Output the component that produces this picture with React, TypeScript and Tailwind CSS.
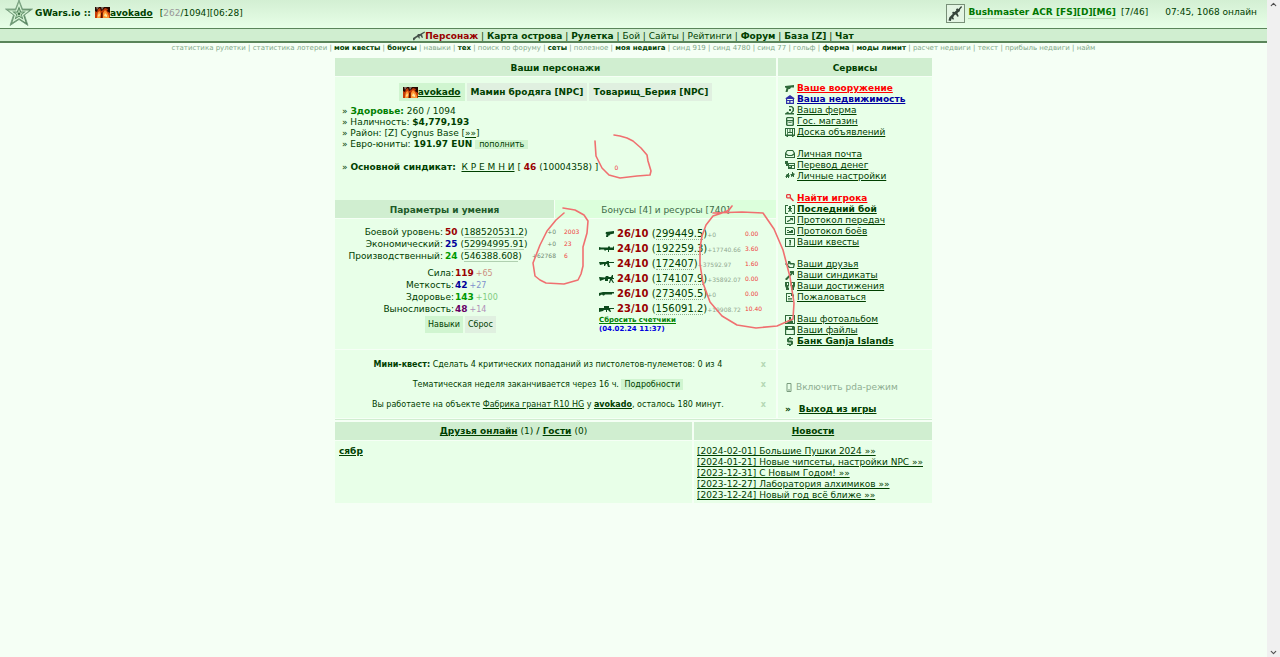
import { ChevronUp, ChevronDown } from 'lucide-react';

const menu = [
  { label: 'Карта острова', bold: true },
  { label: 'Рулетка', bold: true },
  { label: 'Бой', bold: false },
  { label: 'Сайты', bold: false },
  { label: 'Рейтинги', bold: false },
  { label: 'Форум', bold: true },
  { label: 'База [Z]', bold: true },
  { label: 'Чат', bold: true },
];

const shortcuts = [
  { label: 'статистика рулетки' },
  { label: 'статистика лотереи' },
  { label: 'мои квесты', bold: true },
  { label: 'бонусы', bold: true },
  { label: 'навыки' },
  { label: 'тех', bold: true },
  { label: 'поиск по форуму' },
  { label: 'сеты', bold: true },
  { label: 'полезное' },
  { label: 'моя недвига', bold: true },
  { label: 'синд 919' },
  { label: 'синд 4780' },
  { label: 'синд 77' },
  { label: 'гольф' },
  { label: 'ферма', bold: true },
  { label: 'моды лимит', bold: true },
  { label: 'расчет недвиги' },
  { label: 'текст' },
  { label: 'прибыль недвиги' },
  { label: 'найм' },
];

// 10x9 glyphs for the services column
const glyphs: Record<string, string> = {
  gun: 'M0 2L9 1V3.500H6L5 5H3.500L2.500 8H0.500L1.500 4L0 3.500Z',
  house: 'M5 0L10 3.500H9V9H1V3.500H0ZM2.200 4V5H7.800V4ZM2.200 6V7.800H4.200V6ZM5.500 6V7.800H7.800V6Z',
  farm: 'M4 0H7L9 2V5L7 7H9V8.500H0V7.500L3 5.500L4 7H5.500L7.500 4.500V2.500L6.500 1.200H4ZM4 3H6V5H4Z',
  shop: 'M2 0H8L9 1V8L8 9H2L1 8V1ZM2.300 1.200V3H7.700V1.200ZM2.500 4.200V7.800H7.500V4.200ZM3.300 5H6.700V5.800H3.300Z',
  board: 'M0 0H10V8H8.500V9H7V8H3V9H1.500V8H0ZM1 1V6.500H2.200V1ZM3 1V4H4.500V1ZM5.500 1V4H7V1ZM8 1V6.500H9V1ZM3 5V6.500H7V5Z',
  mail: 'M2 0H8L10 3V8H0V3ZM2.500 1L1.200 3.300L3.500 5H6.500L8.800 3.300L7.500 1ZM1 5V7H9V5L7 6H3Z',
  money: 'M0 0H3V2H10V8H3V5H1V3H0ZM4 3V4H9V3ZM4 5V5.800H6V5ZM7 5V7H9V5Z',
  gears: 'M2 2H3V1H4V3L5 3.500L4 5V6H3V5H2V6H1V5L0 4H1V3ZM7 0H8V1L10 2L9 3V5H8V4L6 5V3L5 2H7Z',
  find: 'M2 0H5L6 1V3.200L9 6.500L8 7.500L5 4.500H2L1 3.500V1ZM2.300 1.200V3.300H4.700V1.200Z',
  fight: 'M0 0H3V1H1V8H3V9H0ZM7 0H10V9H7V8H9V1H7ZM4 1H6V3H7V4H6V5L7 7H6L5 6L4 7H3L4 5V4H3V3H4Z',
  transfer: 'M0 0H10V8H0ZM1 1V7H9V1ZM5 2H8V4.500H7V3.500L3 6H2V5L6 3H5Z',
  battles: 'M0 0H8L10 2V8H0ZM1 1V7H9V2.500L7.500 1ZM2 3H4V4H6V3H8V6H2V5H4V4H2Z',
  quest: 'M0 0H10V9H0ZM1 1V8H9V1ZM4 2H6V5.500H5.500V6.500H6V7.200H4V6.500H4.500V3H4Z',
  friends: 'M3 1H5L6 3H9L10 4L9 8H4L0 4L1 3L3 4ZM4 3.500L3 5L5 7H8L8.500 4.500H5Z',
  syndicate: 'M5 0H9V4H8V2.500L2 9H1L0 8L6 2H5Z',
  medals: 'M0 0H4V4L3 5L4 6V8H1V6L0 4ZM5.500 0H10V4L9 6V8H6V6L7 5L5.500 4ZM2 1V3H3V1ZM7 1V3H8V1Z',
  report: 'M1 0H7L9 2V9H1ZM2 1V8H8V3H6V1ZM3 3H5V4H3ZM3 5H7V5.800H3ZM3 6.500H7V7.200H3Z',
  photo: 'M0 0H10V9H0ZM1 1V8H2L3 5.500L4 5V2H6V5L8 6V8H9V1Z',
  files: 'M0 0H9L10 1V9H0ZM1.200 4V8H8.800V4ZM3 1V2.500H7V1Z',
  bank: 'M4 0H6V1H8V2.200H4V3.500H7L8 4.500V7L7 8H6V9H4V8H2V6.800H6V5.500H3L2 4.500V2L3 1H4Z',
};

type Service = { icon: string; label: string; tone?: 'red' | 'blue' | 'bold' };

const services: Service[][] = [
  [
    { icon: 'gun', label: 'Ваше вооружение', tone: 'red' },
    { icon: 'house', label: 'Ваша недвижимость', tone: 'blue' },
    { icon: 'farm', label: 'Ваша ферма' },
    { icon: 'shop', label: 'Гос. магазин' },
    { icon: 'board', label: 'Доска объявлений' },
  ],
  [
    { icon: 'mail', label: 'Личная почта' },
    { icon: 'money', label: 'Перевод денег' },
    { icon: 'gears', label: 'Личные настройки' },
  ],
  [
    { icon: 'find', label: 'Найти игрока', tone: 'red' },
    { icon: 'fight', label: 'Последний бой', tone: 'bold' },
    { icon: 'transfer', label: 'Протокол передач' },
    { icon: 'battles', label: 'Протокол боёв' },
    { icon: 'quest', label: 'Ваши квесты' },
  ],
  [
    { icon: 'friends', label: 'Ваши друзья' },
    { icon: 'syndicate', label: 'Ваши синдикаты' },
    { icon: 'medals', label: 'Ваши достижения' },
    { icon: 'report', label: 'Пожаловаться' },
  ],
  [
    { icon: 'photo', label: 'Ваш фотоальбом' },
    { icon: 'files', label: 'Ваши файлы' },
    { icon: 'bank', label: 'Банк Ganja Islands', tone: 'bold' },
  ],
];

const toneClass = {
  red: 'font-bold text-[#ff0000]',
  blue: 'font-bold text-[#0000a0]',
  bold: 'font-bold',
};

const levels = [
  { label: 'Боевой уровень:', value: '50', color: 'text-[#990000]', exp: '188520531.2', gain: '+0', note: '2003' },
  { label: 'Экономический:', value: '25', color: 'text-[#000099]', exp: '52994995.91', gain: '+0', note: '23' },
  { label: 'Производственный:', value: '24', color: 'text-[#009900]', exp: '546388.608', gain: '+62768', note: '6' },
];

const stats = [
  { label: 'Сила:', value: '119', bonus: '+65', color: 'text-[#990000]', bonusColor: 'text-[#cc9080]' },
  { label: 'Меткость:', value: '42', bonus: '+27', color: 'text-[#000099]', bonusColor: 'text-[#8090cc]' },
  { label: 'Здоровье:', value: '143', bonus: '+100', color: 'text-[#009900]', bonusColor: 'text-[#80cc80]' },
  { label: 'Выносливость:', value: '48', bonus: '+14', color: 'text-[#660066]', bonusColor: 'text-[#b090b8]' },
];

// 16x8 weapon silhouettes
const weapons = [
  { level: '26/10', exp: '299449.5', gain: '+0', note: '0.00', path: 'M7 2L15 1V3.500L11 4.500L10.500 5.500H9.500L9 7H7L7.500 4L6.500 3.500Z' },
  { level: '24/10', exp: '192259.3', gain: '+17740.66', note: '3.60', path: 'M0 2L2 2.500H9V1.500H11V2.500H14V1.500H15V5H10V7H9V5H7L6 6L5 4.500H2L0 5Z' },
  { level: '24/10', exp: '172407', gain: '+37592.97', note: '1.60', path: 'M0 2H7L8 1H10V2H15V3H10V4L11 7H9L8 4H7L6 6H5V4L1 5Z' },
  { level: '24/10', exp: '174107.9', gain: '+35892.07', note: '0.00', path: 'M0 2L6 2.500L7 1H9L10 2H12L13 0H14V3H15V4H13L15 8H14L12 5L11 8H10L11 4H9V6H6V4L1 6Z' },
  { level: '26/10', exp: '273405.5', gain: '+0', note: '0.00', path: 'M0 3L4 2H15V3.500H13V4.500H6L5 5.500H4L3 4.500L0 6Z' },
  { level: '23/10', exp: '156091.2', gain: '+19908.72', note: '10.40', path: 'M0 3H5V1H10V3H15V4H11L12 7H11L9 5H8V7H7V5H5L4 6L0 7Z' },
];

const news = [
  '[2024-02-01] Большие Пушки 2024 »»',
  '[2024-01-21] Новые чипсеты, настройки NPC »»',
  '[2023-12-31] С Новым Годом! »»',
  '[2023-12-27] Лаборатория алхимиков »»',
  '[2023-12-24] Новый год всё ближе »»',
];

function FlameBadge() {
  return (
    <svg viewBox="0 0 15 11" className="inline-block h-[11px] w-[15px] align-[-2px]" aria-hidden="true">
      <rect width="15" height="11" fill="#260800" />
      <path d="M0 4L2 5L3 2L5 1L6 4L8 3L10 1L13 2L12 4L15 6V11H0Z" fill="#c43a08" />
      <path d="M2 9L3 5L5 4L6 7L5 11H2ZM8 11V6L10 3L12 5L14 9V11Z" fill="#ff9430" />
      <path d="M3 9L4 6L5 8L4 10ZM9 9L10 6L12 8V10Z" fill="#ffe6a0" />
      <path d="M6 11V6L7.500 5V11Z" fill="#5c1400" />
      <path d="M1 0H4L2 3ZM6 0H9L7 3Z" fill="#e8e0d0" opacity="0.5" />
    </svg>
  );
}

function StarLogo() {
  return (
    <svg viewBox="0 0 28 28" className="h-[28px] w-[28px] shrink-0" aria-hidden="true">
      <defs>
        <linearGradient id="star" x1="0" y1="0" x2="1" y2="1">
          <stop offset="0" stopColor="#a5cba5" />
          <stop offset="1" stopColor="#3f7047" />
        </linearGradient>
      </defs>
      <path d="M14 0L17.500 9H27.500L19.500 15L23 25.500L14 19.500L5 25.500L8.500 15L0.500 9H10.500Z" fill="url(#star)" stroke="#70987a" strokeWidth="0.800" />
      <path d="M14 4.500L16.500 11H22.500L17.500 15L19.500 21L14 17.500L8.500 21L10.500 15L5.500 11H11.500Z" fill="#5c8c65" stroke="#d8f5d8" strokeWidth="1.200" />
      <path d="M14 9L15.200 12.500H18.500L15.900 14.500L17 17.500L14 15.700L11 17.500L12.100 14.500L9.500 12.500H12.800Z" fill="#b5dab5" />
      <circle cx="14" cy="13.800" r="1.200" fill="#3f7047" />
    </svg>
  );
}

function ServiceIcon({ name, red, blue }: { name: string; red?: boolean; blue?: boolean }) {
  return (
    <svg viewBox="0 0 10 9" className="h-[9px] w-[10px] shrink-0" aria-hidden="true">
      <path d={glyphs[name]} fillRule="evenodd" fill={red ? '#e84040' : blue ? '#3030a8' : '#2f6a3a'} />
    </svg>
  );
}

function RifleIcon({ className }: { className: string }) {
  return (
    <svg viewBox="0 0 16 16" className={className} aria-hidden="true">
      <path d="M14 0L15 1L13 3.500L12.500 5.500L10 7.500L11.500 11L10 11.500L8.500 9L7 9.500L5.500 12L6.500 14L5 14.500L4 13L3 16L0.500 15.500L1.500 12L5 8.500L4.500 6.500L6 6L7 6.500L9 4.500L8.500 3.500L10 2.500L11 3.500Z" fill="#35443a" />
    </svg>
  );
}

function CarbineIcon() {
  return (
    <svg viewBox="0 0 12 10" className="h-[10px] w-3" aria-hidden="true">
      <path d="M0 7L4 4.500L5 3L7 3L11.500 0.500L12 1.500L9 3.500L10 6.500L9 7L7.500 4.800L6.500 5.300L6.800 7.500H6L5 6L3 7L1 9.500L0 9Z" fill="#45524a" />
    </svg>
  );
}

function TopBar() {
  return (
    <header>
      <div className="flex h-7 items-center bg-linear-to-b from-[#d3efd3] to-[#e7ffe7] pl-[5px] pr-[10px] text-[9px]">
        <StarLogo />
        <div className="flex items-center pb-px pl-[2px]">
          <b>GWars.io ::</b>
          <a href="#me" className="ml-1 font-bold underline"><FlameBadge />avokado</a>
          <span className="ml-[7px]">[<span className="text-[#999999]">262</span>/1094][06:28]</span>
        </div>
        <div className="ml-auto flex items-center pb-[2px]">
          <span className="mr-[3px] flex h-[19px] w-[19px] items-center justify-center border border-[#789078] bg-[#e3f5e3]">
            <RifleIcon className="h-[15px] w-[15px]" />
          </span>
          <a href="#weapon" className="border-b border-[#b8dcb8] font-bold leading-[11px] text-[#007700]">Bushmaster ACR [FS][D][M6]</a>
          <span className="ml-[5px]">[7/46]</span>
          <span className="ml-[17px]">07:45, 1068 онлайн</span>
        </div>
      </div>
      <nav className="flex h-[15px] items-center justify-center border-b-2 border-t border-[#5a855a] bg-[#d0eed0] pt-px text-[9px] leading-[12px]">
        <CarbineIcon />
        <a href="#character" className="font-bold text-[#990000]">Персонаж</a>
        {menu.map((item) => (
          <span key={item.label} className="whitespace-pre">
            {' | '}
            <a href="#menu" className={item.bold ? 'font-bold' : ''}>{item.label}</a>
          </span>
        ))}
      </nav>
      <nav className="h-[15px] whitespace-nowrap text-center text-[7px] leading-[11px] text-[#7fa888]">
        {shortcuts.map((item, i) => (
          <span key={item.label}>
            {i > 0 && ' | '}
            <a href="#shortcut" className={item.bold ? 'font-bold text-[#004000]' : ''}>{item.label}</a>
          </span>
        ))}
      </nav>
    </header>
  );
}

function Characters() {
  return (
    <section className="h-[123px] bg-[#e8ffe8] pt-[6px] text-[9px] leading-[11px]">
      <div className="flex justify-center gap-[2px] font-bold">
        <a href="#me" className="flex h-[18px] items-center bg-[#d0f5d0] px-1 underline"><FlameBadge />avokado</a>
        <a href="#npc1" className="flex h-[18px] items-center bg-[#e0f0e0] px-1">Мамин бродяга [NPC]</a>
        <a href="#npc2" className="flex h-[18px] items-center bg-[#e0f0e0] px-1">Товарищ_Берия [NPC]</a>
      </div>
      <div className="pl-[7px] pt-[5px]">
        <p>» <b className="text-[#008000]">Здоровье:</b> 260 / 1094</p>
        <p>» Наличность: <b>$4,779,193</b></p>
        <p>» Район: [Z] Cygnus Base [<a href="#travel" className="underline">»»</a>]</p>
        <p>
          » Евро-юниты: <b>191.97 EUN</b>{' '}
          <button type="button" className="bg-[#d0f5d0] px-1 text-[8px] leading-[9px]">пополнить</button>
        </p>
        <p className="mt-3 whitespace-pre">
          » <b>Основной синдикат:</b>{'  '}
          <a href="#syndicate" className="underline">К Р Е М Н И</a> [ <b className="text-[#990000]">46</b> (10004358) ]
          <span className="ml-4 text-[6px] leading-none text-[#f04040]">0</span>
        </p>
      </div>
    </section>
  );
}

function Params() {
  return (
    <div className="pt-[7px] text-[9px]">
      <table className="leading-[12px]">
        <tbody>
          {levels.map((row) => (
            <tr key={row.label}>
              <th scope="row" className="w-[108px] whitespace-nowrap p-0 text-right font-normal">{row.label}</th>
              <td className="w-[86px] whitespace-nowrap py-0 pl-[2px]">
                <b className={row.color}>{row.value}</b>{' '}
                (<span className="border-b border-[#b0d0b0]">{row.exp}</span>)
              </td>
              <td className="w-[27px] p-0 text-right text-[6px] text-[#708870]">{row.gain}</td>
              <td className="py-0 pl-2 text-[6px] text-[#f04040]">{row.note}</td>
            </tr>
          ))}
        </tbody>
      </table>
      <table className="mt-[5px] leading-[12px]">
        <tbody>
          {stats.map((row) => (
            <tr key={row.label}>
              <th scope="row" className="w-[119px] p-0 text-right font-normal">{row.label}</th>
              <td className="whitespace-nowrap py-0 pl-px">
                <b className={row.color}>{row.value}</b>
                <span className={`${row.bonusColor} pl-[2px] text-[8px] leading-none`}>{row.bonus}</span>
              </td>
            </tr>
          ))}
        </tbody>
      </table>
      <div className="flex gap-[2px] pl-[90px] pt-px text-[8px]">
        <button type="button" className="h-[17px] bg-[#d0f5d0] px-[3px]">Навыки</button>
        <button type="button" className="h-[17px] bg-[#e0f0e0] px-[3px]">Сброс</button>
      </div>
    </div>
  );
}

function Skills() {
  return (
    <div className="pl-2 pt-[7px]">
      <table className="text-[10px] leading-[15px]">
        <tbody>
          {weapons.map((row) => (
            <tr key={row.exp}>
              <td className="p-0">
                <svg viewBox="0 0 16 8" className="mr-[2px] h-2 w-4" aria-hidden="true"><path d={row.path} fill="#0c4a1c" /></svg>
              </td>
              <td className="w-[128px] whitespace-nowrap p-0">
                <b className="text-[#990000]">{row.level}</b>{' '}
                (<span className="border-b border-dotted border-[#90b090]">{row.exp}</span>)
                <span className="text-[6px] leading-none text-[#90a890]">{row.gain}</span>
              </td>
              <td className="p-0 text-[6px] text-[#f04040]">{row.note}</td>
            </tr>
          ))}
        </tbody>
      </table>
      <div className="text-[7px] font-bold leading-[9px]">
        <a href="#reset" className="block text-[#008000] underline">Сбросить счетчики</a>
        <span className="block text-[#0000dd]">(04.02.24 11:37)</span>
      </div>
    </div>
  );
}

function Services() {
  return (
    <aside className="flex flex-col">
      <h2 className="flex h-[18px] items-center justify-center bg-[#d0eed0] pt-[3px] text-[9px] font-bold">Сервисы</h2>
      <div className="mt-px flex-1 space-y-[11px] bg-[#e8ffe8] pl-[7px] pt-[6px] text-[9px] leading-[11px]">
        {services.map((group) => (
          <ul key={group[0].label}>
            {group.map((item) => (
              <li key={item.label} className="flex h-[11px] items-center gap-[2px]">
                <ServiceIcon name={item.icon} red={item.icon === 'find'} blue={item.tone === 'blue'} />
                <a href={`#${item.icon}`} className={`${item.tone ? toneClass[item.tone] : ''} underline`}>{item.label}</a>
              </li>
            ))}
          </ul>
        ))}
      </div>
    </aside>
  );
}

function Notices() {
  return (
    <section className="bg-[#e8ffe8] pb-[3px] pt-[5px] text-[8px]">
      {[
        <><b>Мини-квест:</b> Сделать 4 критических попаданий из пистолетов-пулеметов: 0 из 4</>,
        <>Тематическая неделя заканчивается через 16 ч. <a href="#week" className="bg-[#d0f5d0] px-[3px] py-px">Подробности</a></>,
        <>Вы работаете на объекте <a href="#job" className="underline">Фабрика гранат R10 HG</a> у <a href="#me" className="font-bold underline">avokado</a>, осталось 180 минут.</>,
      ].map((text, i) => (
        <div key={i} className="flex h-5 items-center">
          <p className="flex-1 text-center">{text}</p>
          <button type="button" aria-label="Закрыть" className="mr-[10px] font-bold text-[#b5d8b5]">x</button>
        </div>
      ))}
    </section>
  );
}

// pen marks circling the counters
function PenMarks() {
  return (
    <svg viewBox="0 0 597 446" className="pointer-events-none absolute left-0 top-0 h-[446px] w-[597px]" fill="none" stroke="#f07070" strokeWidth="1.600" strokeLinejoin="round" strokeLinecap="round" aria-hidden="true">
      <path d="M279 77L285 78L292 80L298 83L306 90L312 97L313 103L316 113L315 117L302 118L285 120L274 117L267 110L264 104L261 98L260 83" />
      <path d="M228 150L240 152L249 157L253 163L252 175L248 189L248 208L246 216L243 222L229 226L211 225L205 222L200 218L198 205L205 187L212 173L221 162L229 155" />
      <path d="M397 148L394 152L390 154L378 158L371 167L367 178L365 190L365 206L368 225L375 244L387 258L402 267L421 270L442 268L458 261L459 245L457 232L455 219L448 192L439 171L428 155L407 154L378 155" />
    </svg>
  );
}

export default function App() {
  return (
    <div className="flex min-h-screen bg-[#f5fff5] font-['DejaVu_Sans',Verdana,sans-serif] text-[#004000]">
      <div className="min-w-0 flex-1">
        <TopBar />
        <main className="relative mx-auto w-full max-w-[597px]">
          <div className="grid grid-cols-[1fr_154px] gap-x-[2px]">
            <div>
              <h2 className="mb-px flex h-[18px] items-center justify-center bg-[#d0eed0] pt-[3px] text-[9px] font-bold">Ваши персонажи</h2>
              <Characters />
              <div className="grid grid-cols-[219px_1fr] gap-px text-[9px]">
                <button type="button" className="h-[18px] bg-[#d0eed0] pt-[3px] font-bold text-[#205a28]">Параметры и умения</button>
                <button type="button" className="h-[18px] bg-[#dcffdc] pt-[3px] text-[#406a48]">Бонусы [4] и ресурсы [740]</button>
              </div>
              <div className="mt-px grid h-[130px] grid-cols-[256px_1fr] bg-[#e8ffe8]">
                <Params />
                <Skills />
              </div>
            </div>
            <Services />
          </div>
          <div className="mt-px grid grid-cols-[1fr_154px] gap-x-[2px] border-b border-[#d0eed0] pb-px">
            <Notices />
            <div className="flex flex-col bg-[#e8ffe8] pl-[7px] pt-8 text-[9px] leading-[11px]">
              <a href="#pda" className="flex items-center gap-[3px] text-[#8fae92]">
                <svg viewBox="0 0 8 9" className="h-[9px] w-2" aria-hidden="true">
                  <path d="M2 0.500H6V8.500H2ZM3 7H5" fill="none" stroke="#7a9c7e" />
                </svg>
                Включить pda-режим
              </a>
              <p className="mt-[11px] font-bold">»<a href="#exit" className="ml-2 underline">Выход из игры</a></p>
            </div>
          </div>
          <div className="mt-[2px] grid grid-cols-[1fr_238px] gap-x-[2px] gap-y-px text-[9px] leading-[11px]">
            <h2 className="flex h-[18px] items-center justify-center gap-[3px] bg-[#d0eed0] pt-px">
              <a href="#friends" className="font-bold underline">Друзья онлайн</a> (1) <b>/</b> <a href="#guests" className="font-bold underline">Гости</a> (0)
            </h2>
            <h2 className="flex h-[18px] items-center justify-center bg-[#d0eed0] pt-px">
              <a href="#news" className="font-bold underline">Новости</a>
            </h2>
            <div className="bg-[#e8ffe8] px-1 py-[5px]">
              <a href="#friend" className="font-bold underline">сябр</a>
            </div>
            <ul className="whitespace-nowrap bg-[#e8ffe8] px-[3px] pb-[2px] pt-[5px]">
              {news.map((item) => (
                <li key={item}><a href="#news" className="underline">{item}</a></li>
              ))}
            </ul>
          </div>
          <PenMarks />
        </main>
      </div>
      <div className="flex w-[13px] shrink-0 flex-col items-center justify-between bg-[#f0f0f0] text-[#505050]">
        <ChevronUp className="h-[9px] w-[9px]" strokeWidth={3} />
        <ChevronDown className="h-[9px] w-[9px]" strokeWidth={3} />
      </div>
    </div>
  );
}
